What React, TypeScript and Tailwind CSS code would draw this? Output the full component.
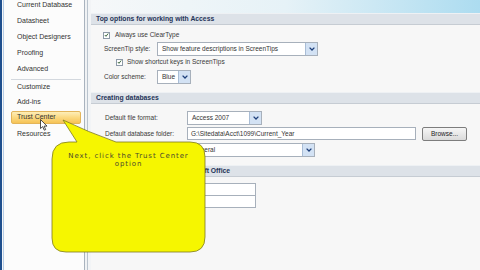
const font = "font-['Liberation_Sans',Arial,sans-serif]";

function Chevron() {
  return (
    <svg width="6" height="4" viewBox="0 0 6 4" aria-hidden="true">
      <path d="M0.6 0.6 L3 3 L5.4 0.6" fill="none" stroke="#1d3f7a" strokeWidth="1.3" />
    </svg>
  );
}

function Check() {
  return (
    <span className="flex h-[7px] w-[7px] items-center justify-center border border-[#8e9aa8] bg-white">
      <svg width="6" height="6" viewBox="0 0 6 6" aria-hidden="true">
        <path d="M1 3 L2.4 4.6 L5 1.2" fill="none" stroke="#2c5a2c" strokeWidth="1.1" />
      </svg>
    </span>
  );
}

function Select({ value, className }: { value: string; className: string }) {
  return (
    <div className={`flex h-[14px] items-stretch border border-[#a7b0bb] bg-white ${className}`}>
      <span className="flex flex-1 items-center overflow-hidden whitespace-nowrap pl-[4px] text-[6.5px] text-[#333]">
        {value}
      </span>
      <span className="flex w-[12px] items-center justify-center border-l border-[#a9bdd6] bg-[#d3e2f4]">
        <Chevron />
      </span>
    </div>
  );
}

function SectionHeader({ title, className = "" }: { title: string; className?: string }) {
  return (
    <div
      className={`flex h-[12px] items-center border-y border-t-[#eef1f4] border-b-[#c6ccd3] bg-[#dde2e8] pl-[5px] text-[6.8px] font-bold text-[#1f3458] ${className}`}
    >
      {title}
    </div>
  );
}

const navTop = ["Current Database", "Datasheet", "Object Designers", "Proofing", "Advanced"];

export default function App() {
  return (
    <div className={`relative flex h-[270px] w-[480px] overflow-hidden bg-[#f7f7f7] ${font}`}>
      {/* window edge */}
      <div className="w-[2px] bg-[#1f4f8e]" />
      <div className="w-px bg-[#f4f7fa]" />
      <div className="w-px bg-[#b7cde6]" />

      {/* navigation */}
      <nav className="w-[81px] border-r border-[#a9b3be] bg-[#fcfcfc] text-[7px] text-[#333]">
        <ul className="-mt-[3px]">
          {navTop.map((item) => (
            <li key={item} className="flex h-[16px] items-center pl-[13px]">
              {item}
            </li>
          ))}
        </ul>
        <div className="ml-[7px] mr-[3px] mt-[2px] h-px bg-[#d3d8de]" />
        <ul>
          <li className="flex h-[15px] items-center pl-[13px]">Customize</li>
          <li className="flex h-[15px] items-center pl-[13px]">Add-ins</li>
          <li className="flex h-[15px] items-center">
            <span className="ml-[7px] mr-[3px] flex h-[13px] flex-1 items-center rounded-[2px] border border-[#e3b55a] bg-gradient-to-b from-[#fdeeb8] via-[#fbd980] to-[#f6c355] pl-[5px]">
              Trust Center
            </span>
          </li>
          <li className="flex h-[18px] items-center pl-[13px]">Resources</li>
        </ul>
      </nav>

      {/* gutter */}
      <div className="w-[2px] bg-[#f0f2f4]" />
      <div className="w-px bg-[#b9c3cd]" />
      <div className="w-[3px] bg-[#f2f4f6]" />

      {/* main */}
      <main className="flex flex-1 flex-col text-[6.5px] text-[#3a3a3a]">
        <div className="h-[13px] bg-gradient-to-r from-[#f6f8f9] via-[#e6f2f7] to-[#acdcf0]" />
        <SectionHeader title="Top options for working with Access" />

        <div className="ml-[12px] mt-[6px] flex h-[8px] items-center gap-[5px]">
          <Check />
          <span>Always use ClearType</span>
        </div>
        <div className="ml-[13px] mt-[3px] flex h-[14px] items-center">
          <span className="w-[53px]">ScreenTip style:</span>
          <Select value="Show feature descriptions in ScreenTips" className="w-[161px]" />
        </div>
        <div className="ml-[25px] mt-[2px] flex h-[8px] items-center gap-[4px]">
          <Check />
          <span>Show shortcut keys in ScreenTips</span>
        </div>
        <div className="ml-[13px] mt-[4px] flex h-[14px] items-center">
          <span className="w-[53px]">Color scheme:</span>
          <Select value="Blue" className="w-[34px]" />
        </div>

        <SectionHeader title="Creating databases" className="mt-[8px]" />

        <div className="ml-[14px] mt-[7px] flex h-[13px] items-center">
          <span className="w-[82px]">Default file format:</span>
          <Select value="Access 2007" className="h-[13px] w-[75px]" />
        </div>
        <div className="ml-[14px] mt-[3px] flex h-[14px] items-start">
          <span className="flex h-[13px] w-[82px] items-center">Default database folder:</span>
          <div className="flex h-[13px] w-[229px] items-center border border-[#a7b0bb] bg-white pl-[3px] text-[#333]">
            G:\Sitedata\Acct\1099\Current_Year
          </div>
          <button className="ml-[6px] flex h-[14px] w-[45px] items-center justify-center rounded-[2px] border border-[#7d7d7d] bg-gradient-to-b from-[#f6f6f6] to-[#dadada] text-[6.5px] text-[#222]">
            Browse...
          </button>
        </div>
        {/* label of this row sits under the callout */}
        <div className="ml-[14px] mt-[2px] flex h-[13px] items-center">
          <span className="w-[82px]" />
          <Select value="General" className="h-[13px] w-[128px]" />
        </div>

        <SectionHeader title="Personalize your copy of Microsoft Office" className="mt-[9px]" />

        <div className="ml-[14px] mt-[6px] flex h-[13px] items-center">
          <span className="w-[82px]" />
          <div className="h-[13px] w-[69px] border border-[#a7b0bb] bg-white" />
        </div>
        <div className="ml-[14px] -mt-px flex h-[13px] items-center">
          <span className="w-[82px]" />
          <div className="h-[13px] w-[69px] border border-[#a7b0bb] bg-white" />
        </div>
      </main>

      {/* mouse pointer */}
      <svg className="absolute left-[40px] top-[119px]" width="8" height="12" viewBox="0 0 8 12" aria-hidden="true">
        <path d="M0.5 0.5 L0.5 9.5 L2.7 7.6 L4.3 11.2 L5.7 10.6 L4.1 7.1 L7 7.1 Z" fill="#fff" stroke="#222" strokeWidth="0.8" />
      </svg>

      {/* callout */}
      <div className="absolute left-[50px] top-[115px] h-[142px] w-[160px]">
        <svg className="absolute inset-0" width="160" height="142" viewBox="0 0 160 142" aria-hidden="true">
          <path
            d="M19 27 L27 27 L13 5 Q38 17 66 27 L140 27 Q155 27 155 42 L155 122 Q155 137 140 137 L16 137 Q2 137 2 123 L2 44 Q2 27 19 27 Z"
            fill="#f6f600"
            stroke="#7d7a22"
            strokeWidth="0.8"
          />
        </svg>
        <div className="absolute left-[2px] top-[37px] w-[153px] text-center font-['DejaVu_Sans',Verdana,sans-serif] text-[7px] leading-[8px] tracking-[0.9px] text-[#4b4a2c]">
          Next, click the Trust Center
          <br />
          option
        </div>
      </div>
    </div>
  );
}
